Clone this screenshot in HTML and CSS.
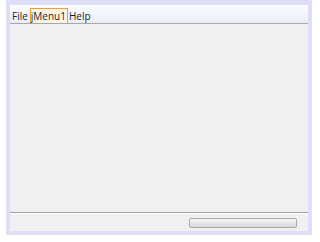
FILE: index.html
```html
<!DOCTYPE html>
<html lang="en">
<head>
    <meta charset="UTF-8">
    <title>jMenu1</title>
    <link rel="stylesheet" href="styles.css">
</head>
<body>
    <div class="window">
        <div class="menubar">
            <span class="menu">File</span>
            <span class="menu selected">jMenu1</span>
            <span class="menu">Help</span>
        </div>
        <div class="content"></div>
        <div class="statusbar">
            <div class="progress"></div>
        </div>
    </div>
</body>
</html>
```

FILE: styles.css
```css
body {
    margin: 0;
    background-color: #ffffff;
    font-family: "Open Sans", "Noto Sans", sans-serif;
    font-size: 10px;
}

.window {
    margin-left: 6px;
    width: 298px;
    height: 226px;
    display: flex;
    flex-direction: column;
    border-style: solid;
    border-color: #dedef6;
    border-width: 5px 4px 4px 4px;
}

.menubar {
    height: 18px;
    display: flex;
    align-items: stretch;
    padding-left: 1px;
    background: linear-gradient(#fbfcfe, #e9edf8);
    border-bottom: 1px solid #a7a7a7;
}

.menu {
    display: flex;
    align-items: center;
    padding: 0 1px 1px 0;
    margin-top: 3px;
    border: 1px solid transparent;
    border-bottom: none;
    color: #1e1e1e;
}

.menu.selected {
    border-color: #ee9f2e;
    background-color: #fbf3e4;
}

.content {
    flex: 1;
    background-color: #f0f0f0;
    border-bottom: 1px solid #a0a0a0;
}

.statusbar {
    height: 17px;
    display: flex;
    justify-content: flex-end;
    align-items: center;
    padding-right: 11px;
    background-color: #f0f0f0;
    border-top: 1px solid #ffffff;
}

.progress {
    width: 106px;
    height: 8px;
    border: 1px solid #a9a9a9;
    border-radius: 2px;
    background: linear-gradient(#f6f6f6, #d8d8d8);
}
```
